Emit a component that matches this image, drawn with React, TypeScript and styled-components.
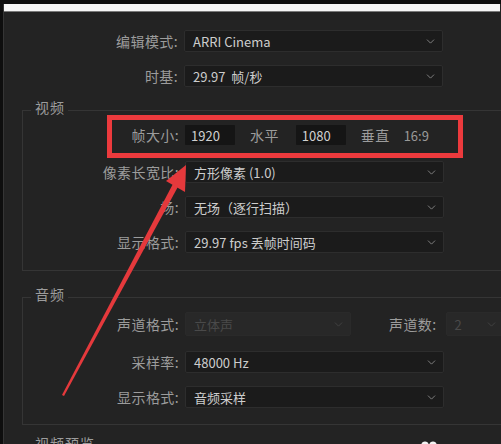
import React from 'react';
import styled, { createGlobalStyle } from 'styled-components';
import { ChevronDown } from 'lucide-react';

const GlobalStyle = createGlobalStyle`
  html, body {
    margin: 0;
    padding: 0;
    background: #0e0e0e;
    overflow: hidden;
  }
  body {
    font-family: "Noto Sans CJK SC", "Noto Sans", sans-serif;
  }
`;

const Screen = styled.div`
  position: relative;
  width: 501px;
  height: 444px;
  padding-top: 4px;
  box-sizing: border-box;
  overflow: hidden;
`;

const Panel = styled.div`
  margin-left: 3px;
  height: 440px;
  background: #232323;
  border-left: 1px solid #353535;
  overflow: hidden;
`;

const TopBar = styled.div`
  height: 7px;
  background: #f6f6f6;
  border-bottom: 1px solid #7a7a7a;
  margin-right: 1px;
`;

const Content = styled.div`
  padding: 18px 0 0 18px;
  display: flex;
  flex-direction: column;
`;

const Rows = styled.div<{ $gap?: number }>`
  display: flex;
  flex-direction: column;
  gap: ${p => p.$gap ?? 13}px;
`;

const Row = styled.div<{ $h?: number }>`
  display: flex;
  align-items: center;
  height: ${p => p.$h ?? 22}px;
`;

const Label = styled.div`
  width: 156px;
  padding-right: 6px;
  flex-shrink: 0;
  text-align: right;
  font-size: 14px;
  letter-spacing: 0.4px;
  color: #9c9c9c;
  white-space: nowrap;
`;

const InlineLabel = styled.div<{ $ml: number }>`
  margin-left: ${p => p.$ml}px;
  font-size: 14px;
  letter-spacing: 0.4px;
  color: #9c9c9c;
  white-space: nowrap;
`;

const Select = styled.div<{ $w?: number; $disabled?: boolean }>`
  width: ${p => p.$w ?? 259}px;
  height: 100%;
  box-sizing: border-box;
  flex-shrink: 0;
  display: flex;
  align-items: center;
  justify-content: space-between;
  padding: 0 5px 0 8px;
  background: ${p => (p.$disabled ? '#282828' : '#1b1b1b')};
  border: 1px solid ${p => (p.$disabled ? '#2a2a2a' : '#2d2d2d')};
  border-radius: 2px;
  font-size: 13px;
  color: ${p => (p.$disabled ? '#4a4a4a' : '#cdcdcd')};
  white-space: nowrap;
  svg {
    color: ${p => (p.$disabled ? '#464646' : '#8c8c8c')};
  }
`;

const NumberBox = styled.div`
  width: 50px;
  height: 20px;
  box-sizing: border-box;
  padding-left: 6px;
  display: flex;
  align-items: center;
  background: #151515;
  border-radius: 1px;
  font-size: 13px;
  color: #d0d0d0;
`;

const Aspect = styled.div`
  margin-left: 14px;
  font-size: 13px;
  color: #999;
`;

const Group = styled.div`
  display: flex;
  flex-direction: column;
  width: 520px;
`;

const GroupHeader = styled.div`
  display: flex;
  align-items: center;
  height: 16px;
`;

const HeaderLine = styled.div<{ $w?: number }>`
  height: 1px;
  margin-top: 6px;
  background: #353535;
  ${p => (p.$w ? `width: ${p.$w}px;` : 'flex: 1;')}
`;

const Caption = styled.div`
  padding: 0 3px 0 4px;
  font-size: 14px;
  letter-spacing: 1px;
  color: #9c9c9c;
`;

const GroupBody = styled.div<{ $pt: number; $pb: number }>`
  border: 1px solid #353535;
  border-top: none;
  margin-top: -4px;
  padding: ${p => p.$pt}px 0 ${p => p.$pb}px 0;
`;

const Spacer = styled.div<{ $h: number }>`
  height: ${p => p.$h}px;
  flex-shrink: 0;
`;

const Dots = styled.svg`
  margin-left: 323px;
  margin-top: 3px;
  flex-shrink: 0;
`;

const RedBox = styled.div`
  position: absolute;
  left: 107px;
  top: 115px;
  width: 356px;
  height: 43px;
  box-sizing: border-box;
  border: 5px solid #ec3a3d;
  pointer-events: none;
`;

const ArrowLayer = styled.svg`
  position: absolute;
  left: 0;
  top: 0;
  pointer-events: none;
`;

const Chevron = () => <ChevronDown size={13} strokeWidth={1.6} />;

const App: React.FC = () => {
  return (
    <>
      <GlobalStyle />
      <Screen>
        <Panel>
          <TopBar />
          <Content>
            <Rows>
              <Row>
                <Label>编辑模式:</Label>
                <Select>
                  ARRI Cinema
                  <Chevron />
                </Select>
              </Row>
              <Row>
                <Label>时基:</Label>
                <Select>
                  29.97 &nbsp;帧/秒
                  <Chevron />
                </Select>
              </Row>
            </Rows>

            <Spacer $h={12} />

            <Group>
              <GroupHeader>
                <HeaderLine $w={9} />
                <Caption>视频</Caption>
                <HeaderLine />
              </GroupHeader>
              <GroupBody $pt={14} $pb={17}>
                <Rows>
                  <Row $h={20} style={{ marginBottom: 3 }}>
                    <Label>帧大小:</Label>
                    <NumberBox>1920</NumberBox>
                    <InlineLabel $ml={15}>水平</InlineLabel>
                    <NumberBox style={{ marginLeft: 17 }}>1080</NumberBox>
                    <InlineLabel $ml={15}>垂直</InlineLabel>
                    <Aspect>16:9</Aspect>
                  </Row>
                  <Row>
                    <Label>像素长宽比:</Label>
                    <Select>
                      方形像素 (1.0)
                      <Chevron />
                    </Select>
                  </Row>
                  <Row>
                    <Label>场:</Label>
                    <Select>
                      无场（逐行扫描）
                      <Chevron />
                    </Select>
                  </Row>
                  <Row>
                    <Label>显示格式:</Label>
                    <Select>
                      29.97 fps 丢帧时间码
                      <Chevron />
                    </Select>
                  </Row>
                </Rows>
              </GroupBody>
            </Group>

            <Spacer $h={15} />

            <Group>
              <GroupHeader>
                <HeaderLine $w={9} />
                <Caption>音频</Caption>
                <HeaderLine />
              </GroupHeader>
              <GroupBody $pt={14} $pb={16}>
                <Rows $gap={15}>
                  <Row $h={24}>
                    <Label>声道格式:</Label>
                    <Select $w={166} $disabled>
                      立体声
                      <Chevron />
                    </Select>
                    <InlineLabel $ml={38}>声道数:</InlineLabel>
                    <Select $w={58} $disabled style={{ marginLeft: 9 }}>
                      2
                      <Chevron />
                    </Select>
                  </Row>
                  <Row>
                    <Label>采样率:</Label>
                    <Select>
                      48000 Hz
                      <Chevron />
                    </Select>
                  </Row>
                  <Row style={{ marginTop: -2 }}>
                    <Label>显示格式:</Label>
                    <Select>
                      音频采样
                      <Chevron />
                    </Select>
                  </Row>
                </Rows>
              </GroupBody>
            </Group>

            <Spacer $h={10} />

            <Group>
              <GroupHeader>
                <HeaderLine $w={9} />
                <Caption>视频预览</Caption>
                <Dots width="16" height="8" viewBox="0 0 16 8">
                  <circle cx="4" cy="4" r="3.6" fill="#f2f2f2" />
                  <circle cx="12" cy="4" r="3.6" fill="#f2f2f2" />
                </Dots>
              </GroupHeader>
            </Group>
          </Content>
        </Panel>

        <RedBox />
        <ArrowLayer width="501" height="444" viewBox="0 0 501 444">
          <polygon points="62,395 64,396 180,183 175,180" fill="#e5393c" />
          <polygon points="186,165 185,192 166,181" fill="#e5393c" />
        </ArrowLayer>
      </Screen>
    </>
  );
};

export default App;
